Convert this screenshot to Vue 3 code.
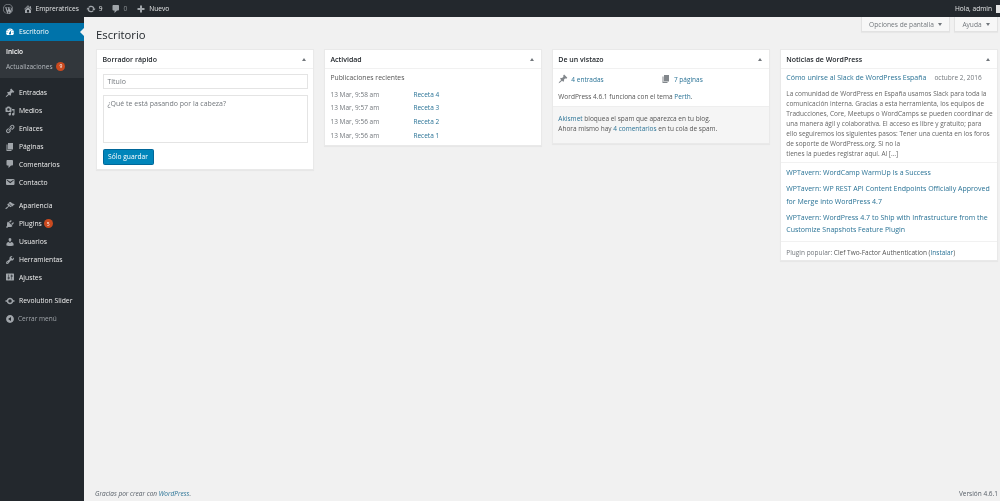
<script setup>
const icons = {
  dash: 'M3.76 16h12.48c1.1-1.37 1.76-3.11 1.76-5 0-4.42-3.58-8-8-8s-8 3.58-8 8c0 1.89.66 3.63 1.76 5zM10 4c.55 0 1 .45 1 1s-.45 1-1 1-1-.45-1-1 .45-1 1-1zM6 6c.55 0 1 .45 1 1s-.45 1-1 1-1-.45-1-1 .45-1 1-1zm8 0c.55 0 1 .45 1 1s-.45 1-1 1-1-.45-1-1 .45-1 1-1zm-5.37 5.55L12 7v6c0 1.1-.9 2-2 2s-2-.9-2-2c0-.57.24-1.08.63-1.45zM4 10c.55 0 1 .45 1 1s-.45 1-1 1-1-.45-1-1 .45-1 1-1zm12 0c.55 0 1 .45 1 1s-.45 1-1 1-1-.45-1-1 .45-1 1-1z',
  pin: 'M10.44 3.02l1.82-1.82 6.36 6.35-1.83 1.82c-1.05-.68-2.48-.57-3.41.36l-.75.75c-.92.93-1.04 2.35-.35 3.41l-1.83 1.82-2.41-2.41-2.8 2.79c-.42.42-3.38 2.71-3.8 2.29s1.86-3.39 2.28-3.81l2.79-2.79L4.1 9.36l1.83-1.82c1.05.69 2.48.57 3.4-.36l.75-.75c.93-.92 1.05-2.35.36-3.41z',
  media: 'M13 11V4c0-.55-.45-1-1-1h-1.67L9 1H5L3.67 3H2c-.55 0-1 .45-1 1v7c0 .55.45 1 1 1h10c.55 0 1-.45 1-1zM7 4.5c1.38 0 2.5 1.12 2.5 2.5S8.38 9.5 7 9.5 4.5 8.38 4.5 7 5.62 4.5 7 4.5zM14 6h5v10.5c0 1.38-1.12 2.5-2.5 2.5S14 17.88 14 16.5s1.12-2.5 2.5-2.5c.17 0 .34.02.5.05V9h-3V6zm-4 8.05V13h2v3.5c0 1.38-1.12 2.5-2.5 2.5S7 17.88 7 16.5 8.12 14 9.5 14c.17 0 .34.02.5.05z',
  links: 'M17.74 2.76c1.68 1.69 1.68 4.41 0 6.1l-1.53 1.52c-1.12 1.12-2.7 1.47-4.14 1.09l2.62-2.61.76-.77.76-.76c.84-.84.84-2.2 0-3.04-.84-.85-2.2-.85-3.04 0l-.77.76-3.38 3.38c-.37-1.44-.02-3.02 1.1-4.14l1.52-1.53c1.69-1.68 4.42-1.68 6.1 0zM8.59 13.43l5.34-5.34c.42-.42.42-1.1 0-1.52-.44-.43-1.13-.39-1.53 0l-5.33 5.34c-.42.42-.42 1.1 0 1.52.44.43 1.13.39 1.52 0zm-.76 2.29l4.14-4.15c.38 1.44.03 3.02-1.09 4.14l-1.52 1.53c-1.69 1.68-4.41 1.68-6.1 0-1.68-1.68-1.68-4.42 0-6.1l1.53-1.52c1.12-1.12 2.7-1.47 4.14-1.1l-4.14 4.15c-.85.84-.85 2.2 0 3.05.84.84 2.2.84 3.04 0z',
  page: 'M6 15V2h10v13H6zm-1 1h8v2H3V5h2v11z',
  comment: 'M5 2h9c1.1 0 2 .9 2 2v7c0 1.1-.9 2-2 2h-2l-5 5v-5H5c-1.1 0-2-.9-2-2V4c0-1.1.9-2 2-2z',
  mail: 'M3.87 4h13.25C18.37 4 19 4.59 19 5.79v8.42c0 1.19-.63 1.79-1.88 1.79H3.87c-1.25 0-1.88-.6-1.88-1.79V5.79c0-1.2.63-1.79 1.88-1.79zm6.62 8.6l6.74-5.53c.24-.2.43-.66.13-1.07-.29-.41-.82-.42-1.17-.17l-5.7 3.86L4.8 5.83c-.35-.25-.88-.24-1.17.17-.3.41-.11.87.13 1.07z',
  brush: 'M14.48 11.06L7.41 3.99l1.5-1.5c.5-.56 2.3-.47 3.51.32 1.21.8 1.43 1.28 2.91 2.1 1.18.64 2.45 1.26 4.45.85zm-.71.71L6.7 4.7 4.93 6.47c-.39.39-.39 1.02 0 1.41l1.06 1.06c.39.39.39 1.03 0 1.42-.6.6-1.43 1.11-2.21 1.69-.35.26-.7.53-1.01.84C1.43 13.23.4 14.98 1.2 15.8c.81.8 2.57-.23 3.9-1.57.31-.31.58-.66.85-1.02.57-.78 1.08-1.61 1.69-2.21.39-.39 1.02-.39 1.41 0l1.06 1.06c.39.39 1.02.39 1.41 0z',
  plug: 'M13.11 4.36L9.87 7.6 8 5.73l3.24-3.24c.35-.34 1.05-.2 1.56.32.52.51.66 1.21.31 1.55zm-8 1.77l.91-1.12 9.01 9.01-1.19.84c-.71.71-2.63 1.16-3.82 1.16H6.14L4.9 17.26c-.59.59-1.54.59-2.12 0-.59-.58-.59-1.53 0-2.12l1.24-1.24v-3.88c0-1.13.4-3.19 1.09-3.89zm7.26 3.97l3.24-3.24c.34-.35 1.04-.21 1.55.31.52.51.66 1.21.31 1.55l-3.24 3.25z',
  user: 'M10 9.25c-2.27 0-2.73-3.44-2.73-3.44C7 4.02 7.82 2 9.97 2c2.16 0 2.98 2.02 2.71 3.81 0 0-.41 3.44-2.68 3.44zm0 2.57L12.72 10c2.39 0 4.52 2.33 4.52 4.53v2.49s-3.65 1.13-7.24 1.13c-3.65 0-7.24-1.13-7.24-1.13v-2.49c0-2.25 1.94-4.48 4.47-4.48z',
  tool: 'M16.68 9.77c-1.34 1.34-3.3 1.67-4.95.99l-5.41 6.52c-.99.99-2.59.99-3.58 0s-.99-2.59 0-3.57l6.52-5.42c-.68-1.65-.35-3.61.99-4.95 1.28-1.28 3.12-1.62 4.72-1.06l-2.89 2.89 2.82 2.82 2.86-2.87c.53 1.58.18 3.39-1.08 4.65zM3.81 16.21c.4.39 1.04.39 1.43 0 .4-.4.4-1.04 0-1.43-.39-.4-1.03-.4-1.43 0-.39.39-.39 1.03 0 1.43z',
  settings: 'M18 16V4c0-.55-.45-1-1-1H3c-.55 0-1 .45-1 1v12c0 .55.45 1 1 1h14c.55 0 1-.45 1-1zM8 11h1c.55 0 1 .45 1 1s-.45 1-1 1H8v1.5c0 .28-.22.5-.5.5s-.5-.22-.5-.5V13H6c-.55 0-1-.45-1-1s.45-1 1-1h1V5.5c0-.28.22-.5.5-.5s.5.22.5.5V11zm5-2h-1c-.55 0-1-.45-1-1s.45-1 1-1h1V5.5c0-.28.22-.5.5-.5s.5.22.5.5V7h1c.55 0 1 .45 1 1s-.45 1-1 1h-1v5.5c0 .28-.22.5-.5.5s-.5-.22-.5-.5V9z',
  update: 'M10.2 3.28c3.53 0 6.43 2.61 6.92 6h2.08l-3.5 4-3.5-4h2.32c-.45-1.97-2.21-3.45-4.32-3.45-1.45 0-2.73.71-3.54 1.78L4.95 5.66C6.23 4.2 8.11 3.28 10.2 3.28zm-.4 13.44c-3.52 0-6.43-2.61-6.92-6H.8l3.5-4c1.17 1.33 2.33 2.67 3.5 4H5.48c.45 1.97 2.21 3.45 4.32 3.45 1.45 0 2.73-.71 3.54-1.78l1.71 1.95c-1.28 1.46-3.15 2.38-5.25 2.38z',
  home: 'M16 8.5l1.53 1.53-1.06 1.06L10 4.62l-6.47 6.47-1.06-1.06L10 2.5l4 4v-2h2v4zm-6-2.46l6 5.99V18H4v-5.97zM12 17v-5H8v5h4z',
  plus: 'M17 8v4h-5v5H8v-5H3V8h5V3h4v5h5z',
  collapse: 'M10 2.16c4.33 0 7.84 3.51 7.84 7.84s-3.51 7.84-7.84 7.84S2.16 14.33 2.16 10 5.71 2.16 10 2.16zm2 11.72V6.12L6.18 9.97z',
  slider: 'M10 3.5c3.1 0 5.7 2.1 6.4 5H19v3h-2.6c-.7 2.9-3.3 5-6.4 5s-5.7-2.1-6.4-5H1v-3h2.6c.7-2.9 3.3-5 6.4-5zm0 3a3.5 3.5 0 1 0 0 7 3.5 3.5 0 0 0 0-7z',
  wp: 'M10 0a10 10 0 1 1 0 20 10 10 0 0 1 0-20zm0 1.1a8.9 8.9 0 1 0 0 17.8 8.9 8.9 0 0 0 0-17.8zM3.2 6.4h5.2v.7l-1.3.2 2.2 6.4 1.3-3.9-.9-2.5-.9-.2v-.7h5v.7l-1.2.2 2.1 6.3 1-3.3c.5-1.700-.6-2.400-.9-3.100h2.100c1.100 2.300.8 4.400.2 6.100l-2.500 6.800h-.8l-2.200-6.200-2.100 6.200h-.9L4.700 7.300l-1.500-.2z'
}
const groups = [
  [['pin','Entradas'],['media','Medios'],['links','Enlaces'],['page','Páginas'],['comment','Comentarios'],['mail','Contacto']],
  [['brush','Apariencia'],['plug','Plugins','5'],['user','Usuarios'],['tool','Herramientas'],['settings','Ajustes']],
  [['slider','Revolution Slider']]
]
const activity = [
  ['13 Mar, 9:58 am','Receta 4'],
  ['13 Mar, 9:57 am','Receta 3'],
  ['13 Mar, 9:56 am','Receta 2'],
  ['13 Mar, 9:56 am','Receta 1']
]
const excerpt = [
  'La comunidad de WordPress en España usamos Slack para toda la',
  'comunicación interna. Gracias a esta herramienta, los equipos de',
  'Traducciones, Core, Meetups o WordCamps se pueden coordinar de',
  'una manera ágil y colaborativa. El acceso es libre y gratuito; para',
  'ello seguiremos los siguientes pasos: Tener una cuenta en los foros',
  'de soporte de WordPress.org. Si no la',
  'tienes la puedes registrar aquí. Al […]'
]
</script>

<template>
  <div class="page">
    <header class="adminbar">
      <svg class="logo" viewBox="0 0 20 20"><path :d="icons.wp" fill-rule="evenodd" /></svg>
      <span class="ab ab-site"><svg viewBox="0 0 20 20"><path :d="icons.home" /></svg>Empreratrices</span>
      <span class="ab ab-upd"><svg viewBox="0 0 20 20"><path :d="icons.update" /></svg>9</span>
      <span class="ab ab-com"><svg viewBox="0 0 20 20"><path :d="icons.comment" /></svg><i class="zero">0</i></span>
      <span class="ab ab-new"><svg viewBox="0 0 20 20"><path :d="icons.plus" /></svg>Nuevo</span>
      <span class="hello">Hola, admin<b class="avatar"></b></span>
    </header>
    <div class="body">
      <aside class="sidebar">
        <div class="item active"><svg viewBox="0 0 20 20"><path :d="icons.dash" /></svg>Escritorio<b class="caret"></b></div>
        <div class="submenu">
          <div class="sub strong">Inicio</div>
          <div class="sub">Actualizaciones <span class="badge">9</span></div>
        </div>
        <div v-for="(g, i) in groups" :key="i" class="group">
          <div v-for="it in g" :key="it[1]" class="item">
            <svg viewBox="0 0 20 20"><path :d="icons[it[0]]" fill-rule="evenodd" /></svg>{{ it[1] }}<span v-if="it[2]" class="badge">{{ it[2] }}</span>
          </div>
        </div>
        <div class="item collapse"><svg viewBox="0 0 20 20"><path :d="icons.collapse" /></svg>Cerrar menú</div>
      </aside>
      <main class="main">
        <div class="tabs">
          <span class="tab tab-opt">Opciones de pantalla<b class="down"></b></span>
          <span class="tab tab-help">Ayuda<b class="down"></b></span>
        </div>
        <h1 class="title">Escritorio</h1>
        <div class="cards">
          <section class="card c1">
            <div class="head">Borrador rápido<b class="up"></b></div>
            <div class="in draft">
              <div class="input">Título</div>
              <div class="textarea">¿Qué te está pasando por la cabeza?</div>
              <span class="btn">Sólo guardar</span>
            </div>
          </section>
          <section class="card c2">
            <div class="head">Actividad<b class="up"></b></div>
            <div class="in act">
              <div class="sub-h">Publicaciones recientes</div>
              <div v-for="r in activity" :key="r[1]" class="act-row"><span class="time">{{ r[0] }}</span><a>{{ r[1] }}</a></div>
            </div>
          </section>
          <section class="card c3">
            <div class="head">De un vistazo<b class="up"></b></div>
            <div class="in glance">
              <div class="counts">
                <span class="count"><svg viewBox="0 0 20 20"><path :d="icons.pin" /></svg><a>4 entradas</a></span>
                <span class="count"><svg viewBox="0 0 20 20"><path :d="icons.page" /></svg><a>7 páginas</a></span>
              </div>
              <p class="ver">WordPress 4.6.1 funciona con el tema <a>Perth</a>.</p>
            </div>
            <div class="spam">
              <p><a>Akismet</a> bloquea el spam que aparezca en tu blog.</p>
              <p>Ahora mismo hay <a>4 comentarios</a> en tu cola de spam.</p>
            </div>
          </section>
          <section class="card c4">
            <div class="head">Noticias de WordPress<b class="up"></b></div>
            <div class="in news1">
              <div class="news-top"><a class="big">Cómo unirse al Slack de WordPress España</a><span class="date">octubre 2, 2016</span></div>
              <div v-for="l in excerpt" :key="l" class="ex">{{ l }}</div>
            </div>
            <div class="in news2">
              <a class="big one">WPTavern: WordCamp WarmUp Is a Success</a>
              <a class="big">WPTavern: WP REST API Content Endpoints Officially Approved for Merge into WordPress 4.7</a>
              <a class="big">WPTavern: WordPress 4.7 to Ship with Infrastructure from the Customize Snapshots Feature Plugin</a>
            </div>
            <div class="in news3"><span class="grey">Plugin popular:</span> Clef Two-Factor Authentication (<a>Instalar</a>)</div>
          </section>
        </div>
        <footer class="foot">
          <span class="thanks">Gracias por crear con <a>WordPress</a>.</span>
          <span class="version">Versión 4.6.1</span>
        </footer>
      </main>
    </div>
  </div>
</template>

<style>
html, body { margin: 0; background: #f1f1f1; }
</style>

<style scoped>
.page { width: 1000px; height: 501px; display: flex; flex-direction: column; overflow: hidden; font-family: "Open Sans", sans-serif; font-size: 6.5px; color: #555; background: #f1f1f1; filter: blur(.25px); }
a { color: #2a7396; }
p { margin: 0; }
.adminbar { height: 17px; flex: none; background: #23282d; color: #e4e6e7; display: flex; align-items: center; position: relative; font-size: 6.6px; }
.adminbar svg { width: 10px; height: 10px; fill: #a0a5aa; flex: none; }
.logo { margin-left: 3px; }
.ab { display: flex; align-items: center; }
.ab-site { margin-left: 10px; gap: 2.5px; }
.ab-upd { margin-left: 7px; gap: 3px; }
.ab-com { margin-left: 8px; gap: 3px; }
.zero { font-style: normal; color: #8b9094; }
.ab-new { margin-left: 9px; gap: 3px; }
.hello { margin-left: auto; display: flex; align-items: center; gap: 4px; }
.avatar { width: 4px; height: 8px; background: #e4e4e4; }
.body { flex: 1; display: flex; min-height: 0; }
.sidebar { width: 84px; flex: none; background: #23282d; padding-top: 6px; box-sizing: border-box; color: #eee; font-size: 6.8px; }
.item { height: 17.9px; display: flex; align-items: center; padding-left: 5px; position: relative; }
.item svg { width: 10px; height: 10px; fill: #a0a5aa; margin-right: 4px; flex: none; }
.active { background: #0073aa; color: #fff; }
.active svg { fill: #fff; }
.caret { position: absolute; right: 0; top: 5px; border: 4px solid transparent; border-right-color: #f1f1f1; border-left-width: 0; }
.submenu { background: #32373c; padding: 3.5px 0 3px; height: 37.5px; box-sizing: border-box; font-size: 6.5px; }
.sub { height: 14.5px; display: flex; align-items: center; padding-left: 6px; color: #b4b9be; gap: 2px; }
.strong { color: #fff; font-weight: 600; }
.group { margin-top: 5.6px; }
.badge { width: 9px; height: 9px; border-radius: 50%; background: #ca4a1f; color: #fff; font-size: 5px; display: inline-flex; align-items: center; justify-content: center; margin-left: 2px; }
.collapse { color: #a0a5aa; font-size: 6.5px; }
.collapse svg { margin-right: 3px; }
.main { flex: 1; min-width: 0; padding: 0 2px 0 12px; display: flex; flex-direction: column; position: relative; }
.tabs { display: flex; justify-content: flex-end; gap: 4px; height: 15px; font-size: 6.6px; }
.tab { background: #f7f7f7; border: 1px solid #e2e2e2; border-top: 0; box-sizing: border-box; color: #72777c; display: flex; align-items: center; justify-content: center; gap: 4px; box-shadow: 0 1px 1px rgba(0,0,0,.04); }
.tab-opt { width: 89px; }
.tab-help { width: 44px; }
.down { border: 2.5px solid transparent; border-top: 3px solid #72777c; border-bottom: 0; }
.title { font-size: 11.3px; font-weight: 400; color: #23282d; margin: -5px 0 0; height: 22px; line-height: 16px; }
.cards { display: grid; grid-template-columns: repeat(4, minmax(0, 1fr)); gap: 9.7px; align-items: start; }
.card { background: #fff; border: 1px solid #e9e9e9; box-sizing: border-box; box-shadow: 0 1px 1px rgba(0,0,0,.04); }
.c1 { height: 121px; }
.c2 { height: 97px; }
.c3 { height: 95px; }
.c4 { height: 212px; }
.head { height: 18.5px; box-sizing: border-box; border-bottom: 1px solid #f1f1f1; display: flex; align-items: center; justify-content: space-between; padding: 1px 7px 0 5.5px; color: #23282d; font-size: 7px; font-weight: 600; }
.up { border: 2.5px solid transparent; border-bottom: 3px solid #72777c; border-top: 0; }
.in { padding: 0 5.5px; }
.draft { padding-top: 5.5px; display: flex; flex-direction: column; align-items: stretch; }
.input, .textarea { border: 1px solid #e4e4e4; box-sizing: border-box; color: #72777c; padding-left: 4px; font-size: 7px; }
.input { height: 15px; line-height: 13px; }
.textarea { height: 48px; margin-top: 6px; line-height: 15px; }
.btn { width: 51px; height: 15.5px; margin-top: 6px; background: #0085ba; border: 1px solid #006799; border-radius: 1.5px; box-sizing: border-box; color: #fff; display: flex; align-items: center; justify-content: center; font-size: 6.7px; }
.act { padding-top: 4px; }
.sub-h { height: 10px; line-height: 10px; margin-bottom: 5px; font-size: 6.8px; }
.act-row { display: flex; height: 13.6px; align-items: center; }
.time { width: 83px; color: #72777c; }
.counts { display: flex; padding-top: 5px; height: 11px; align-items: center; }
.count { display: flex; align-items: center; width: 104px; gap: 3px; }
.count svg { width: 10px; height: 10px; fill: #82878c; }
.ver { margin-top: 7px; line-height: 10px; }
.spam { background: #f5f5f5; border-top: 1px solid #eee; margin-top: 4px; padding: 7px 5.5px 0; height: 37px; box-sizing: border-box; line-height: 10px; }
.news1 { padding-top: 2.5px; padding-bottom: 3.5px; border-bottom: 1px solid #f1f1f1; }
.news-top { display: flex; gap: 8px; height: 17.5px; padding-bottom: 4px; box-sizing: border-box; align-items: center; white-space: nowrap; }
.big { display: block; font-size: 7px; line-height: 12.5px; }
.date { color: #72777c; }
.ex { line-height: 10px; height: 10px; color: #666; white-space: nowrap; }
.news2 { padding-top: 4px; padding-bottom: 4px; border-bottom: 1px solid #f1f1f1; display: flex; flex-direction: column; gap: 3.5px; }
.news3 { padding-top: 6px; line-height: 10px; }
.grey { color: #72777c; }
.foot { margin-top: auto; height: 12px; display: flex; justify-content: space-between; color: #555d66; font-size: 6.5px; }
.thanks { font-style: italic; margin-left: -1px; }
</style>
